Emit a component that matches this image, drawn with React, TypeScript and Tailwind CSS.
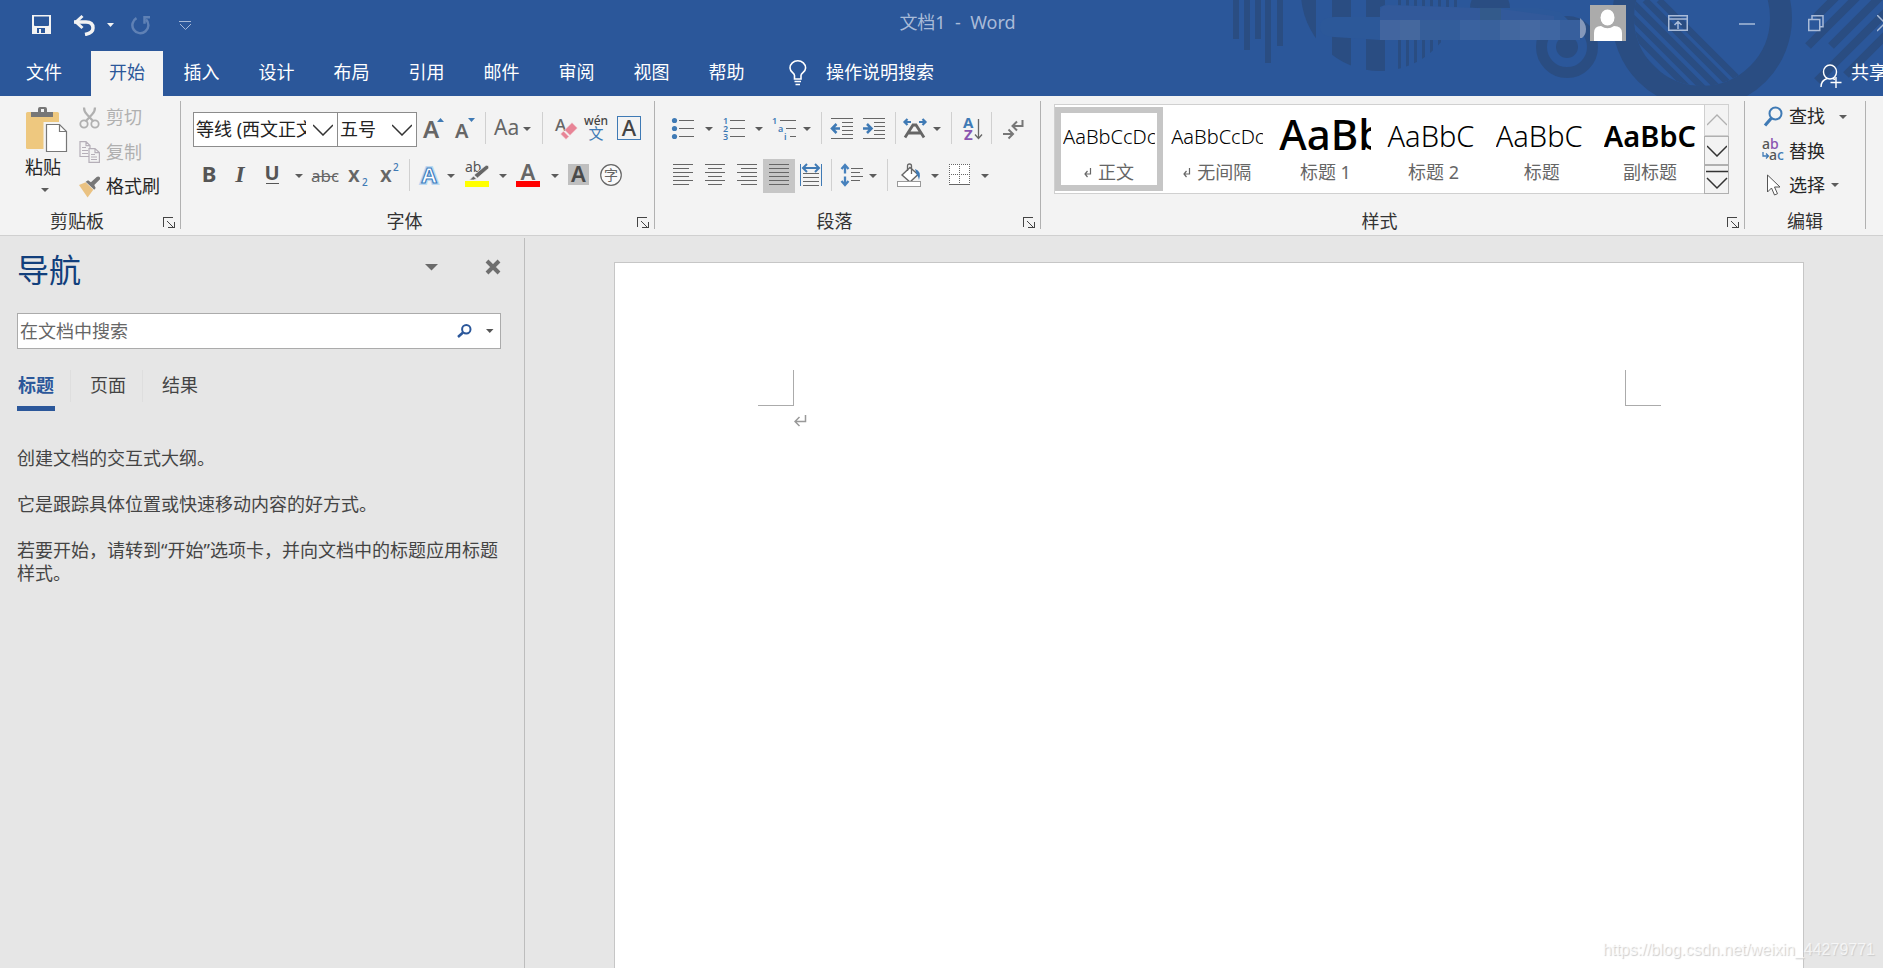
import type { ReactNode } from "react";

const G = "#666666";
const B = "#3f7ab5";

function Icon({ children, label, width = "w-8", active = false }: { children: ReactNode; label: string; width?: string; active?: boolean }) {
  return (
    <button type="button" aria-label={label} className={`flex h-full shrink-0 items-start justify-center pt-1 ${width} ${active ? "bg-[#c6c6c6]" : ""}`}>
      <svg width="24" height="24" viewBox="0 0 24 24" fill="none" className="overflow-visible">
        {children}
      </svg>
    </button>
  );
}

function Caret({ width = "w-3", label }: { width?: string; label: string }) {
  return (
    <button type="button" aria-label={label} className={`flex h-full shrink-0 items-start justify-center pt-1 ${width}`}>
      <svg width="8" height="24" viewBox="0 0 8 24">
        <path d="M0 11h8l-4 4z" fill="#5c5c5c" />
      </svg>
    </button>
  );
}

function Sep({ width = "w-2" }: { width?: string }) {
  return (
    <div className={`flex h-full shrink-0 justify-center ${width}`}>
      <div className="h-8 w-px bg-[#d0d0d0]" />
    </div>
  );
}

function Lines({ rows }: { rows: [number, number, number][] }) {
  return (
    <g stroke={G} strokeWidth="1" shapeRendering="crispEdges">
      {rows.map(([x1, x2, y]) => (
        <path key={`${x1}-${y}`} d={`M${x1} ${y + 0.5}H${x2}`} />
      ))}
    </g>
  );
}

function Group({ label, launcher = true, grow = false, children }: { label: string; launcher?: boolean; grow?: boolean; children: ReactNode }) {
  return (
    <section aria-label={label} className={`flex ${grow ? "min-w-0 flex-1" : "shrink-0"}`}>
      <div className="flex min-w-0 flex-1 flex-col">
        <div className="h-[113px]">{children}</div>
        <div className="flex h-6 items-center">
          <div className="flex-1 text-center leading-6 text-[#333]">{label}</div>
          {launcher && (
            <button type="button" aria-label={`${label}设置`} className="flex w-[26px] justify-end pt-1 pr-[5px]">
              <svg width="12" height="12" viewBox="0 0 12 12" fill="none" stroke="#444" shapeRendering="crispEdges">
                <path d="M.5 10V.5H10" />
                <path d="M4 4l6 6M11 5v5.5H5" />
              </svg>
            </button>
          )}
        </div>
      </div>
      <div className="mt-[5px] h-32 w-px shrink-0 bg-[#b1b1b1]" />
    </section>
  );
}

const tabs = ["开始", "插入", "设计", "布局", "引用", "邮件", "审阅", "视图", "帮助"];

function HeaderArt() {
  return (
    <svg className="pointer-events-none absolute top-0 right-0" width="683" height="96" viewBox="1200 0 683 96" aria-hidden="true">
      <defs>
        <clipPath id="disc"><circle cx="1380" cy="-8" r="79" /></clipPath>
        <clipPath id="hole"><circle cx="1702" cy="18" r="68" /></clipPath>
      </defs>
      <g fill="#2a4d82">
        <rect x="1233" y="0" width="6" height="39" />
        <rect x="1244" y="0" width="6" height="50" />
        <rect x="1255" y="0" width="6" height="39" />
        <rect x="1265" y="0" width="6" height="63" />
        <rect x="1277" y="0" width="6" height="46" />
        <g clipPath="url(#disc)">
          <rect x="1300" y="0" width="16" height="60" />
          <rect x="1332" y="0" width="19" height="80" />
          <rect x="1366" y="0" width="19" height="80" />
          {[1398, 1406, 1414, 1422, 1430, 1438, 1446, 1454].map((x) => (
            <rect key={x} x={x} y="0" width="3" height="80" />
          ))}
        </g>
        <circle cx="1490" cy="8" r="20" />
        <circle cx="1567" cy="47" r="11" />
      </g>
      <g fill="none" stroke="#2a4d82">
        <circle cx="1567" cy="47" r="25.5" strokeWidth="11" />
        <circle cx="1702" cy="18" r="79" strokeWidth="22" />
        <g clipPath="url(#hole)" strokeWidth="6.5">
          <path d="M1568 0l100 100M1584 0l100 100M1600 0l100 100M1615 0l100 100M1630 0l100 100M1645 0l100 100M1659 0l100 100" />
        </g>
        <g strokeWidth="8">
          <path d="M1816 17l20-20M1808 46l54-54M1831 46l54-54M1817 81l70-70M1846 75l40-40" />
        </g>
      </g>
      <path d="M1320 27q0-10 14-10h46V7q3-2 8-2l90 3h60l22 4 10 10v18h-190l-46-3q-14 0-14-10z" fill="#2c5899" />
      <path d="M1380 20v-9q1-6 8-6l62 2 52 2 52 7v4z" fill="#32599a" />
      <rect x="1480" y="8" width="21" height="12" fill="#335a8b" />
      {["#42659f", "#45689e", "#365e99", "#335d9b", "#3a629f", "#39619c", "#42679f", "#4569a2", "#3f66a2", "#375f9d"].map((fill, i) => (
        <rect key={i} x={1380 + i * 20} y="20" width="20" height="20" fill={fill} />
      ))}
      <path d="M1580 18q6 5 6 11t-4 9h-2z" fill="#8598ba" />
    </svg>
  );
}

function Header() {
  return (
    <header className="relative shrink-0 overflow-hidden bg-[#2b579a] text-white">
      <HeaderArt />
      <div className="relative -mr-8 grid h-[51px] grid-cols-[1fr_auto_1fr]">
        <div className="flex items-start gap-5 pt-3 pl-8">
          <button type="button" aria-label="保存">
            <svg width="20" height="24" viewBox="0 0 20 24" fill="#f3f3f3">
              <path fillRule="evenodd" d="M0 3h19v19H0zM2 4.500v8.500q0 1 1 1h13q1 0 1-1V4.500zM5 16v5h2v-4h2v4h4v-5z" />
            </svg>
          </button>
          <div className="flex gap-3">
            <button type="button" aria-label="撤消">
              <svg width="23" height="24" viewBox="0 0 23 24" fill="none" stroke="#f3f3f3">
                <path d="M2 10H14q7 0 7 6 0 5-8 6.500" strokeWidth="3.500" />
                <path d="M10.500 4L4 10l6.500 6" strokeWidth="3" />
              </svg>
            </button>
            <button type="button" aria-label="撤消选项">
              <svg width="8" height="24" viewBox="0 0 8 24"><path d="M0 11h7l-3.500 4z" fill="#f3f3f3" /></svg>
            </button>
          </div>
          <div className="-ml-1 flex gap-7">
            <button type="button" aria-label="重复">
              <svg width="20" height="24" viewBox="0 0 20 24" fill="none" stroke="#5f81b5" strokeWidth="2.500">
                <path d="M5.500 6.200A8 8 0 1 0 15 7.500" />
                <path d="M19 5.200h-5.500v6.500" />
              </svg>
            </button>
            <button type="button" aria-label="自定义快速访问工具栏">
              <svg width="13" height="24" viewBox="0 0 13 24" fill="none" stroke="#a5b8d7"><path d="M0 9.500h12M1 12l5.500 5.500L12 12" /></svg>
            </button>
          </div>
        </div>
        <div className="self-start pt-2 leading-7 whitespace-pre text-[#a9bbd8]">文档1  -  Word</div>
        <div className="-mr-1 flex items-start justify-end">
          <div className="mt-[5px] mr-[17px] h-9 w-9 bg-[#ababab]">
            <svg width="36" height="36" viewBox="0 0 36 36" fill="#fff" aria-label="用户头像">
              <ellipse cx="17.500" cy="12.500" rx="7" ry="8" />
              <path d="M4 36V28q0-7 7-7 6.500 4.500 13 0 8 0 8 7v8z" />
            </svg>
          </div>
          <button type="button" aria-label="功能区显示选项" className="flex w-[69px] justify-center pt-[15px]">
            <svg width="20" height="17" viewBox="0 0 20 17" fill="none" stroke="#a9bbd8" strokeWidth="1.500"><path d="M.75.75h18.500v14.500H.75zM1 4h18M10 14V6.500M6.500 10L10 6.500l3.500 3.500" /></svg>
          </button>
          <button type="button" aria-label="最小化" className="flex w-[69px] justify-center pt-[15px]">
            <svg width="16" height="17" viewBox="0 0 16 17" stroke="#a9bbd8"><path d="M0 9h16" strokeWidth="1.500" /></svg>
          </button>
          <button type="button" aria-label="还原" className="flex w-[69px] justify-center pt-[15px]">
            <svg width="16" height="17" viewBox="0 0 16 17" fill="none" stroke="#a9bbd8" strokeWidth="1.500"><path d="M.75 4.500h11v11h-11zM4 4V.75h11v11h-3" /></svg>
          </button>
          <button type="button" aria-label="关闭" className="flex w-[69px] justify-center pt-[15px]">
            <svg width="16" height="17" viewBox="0 0 16 17" stroke="#a9bbd8" strokeWidth="1.500"><path d="M0 0l16 16M16 0L0 16" /></svg>
          </button>
        </div>
      </div>
      <div className="relative -mr-8 flex h-[45px] items-stretch leading-[43px]">
        <nav className="flex">
          <button type="button" className="w-[90px] pr-0.5 pb-0.5">文件</button>
          {tabs.map((t, i) => (
            <button key={t} type="button" className={`w-[75px] pr-0.5 ${i === 0 ? "bg-[#f3f3f3] bg-clip-content pl-px text-[#2b579a]" : ""}`}>
              <span className="block h-[45px]">{t}</span>
            </button>
          ))}
        </nav>
        <button type="button" className="ml-6 flex gap-[19px]">
          <svg width="18" height="26" viewBox="0 0 18 26" fill="none" stroke="#fff" strokeWidth="1.600" className="mt-[9px]">
            <path d="M5.500 19v-3.500C5.500 13 1 12 1 8a7.800 7.200 0 0 1 15.600 0c0 4-4.600 5-4.600 7.500V19zM5.500 21.500h6.500M6.500 24.500h4.500" />
          </svg>
          操作说明搜索
        </button>
        <button type="button" className="mr-7 ml-auto flex gap-2">
          <svg width="23" height="24" viewBox="0 0 23 24" fill="none" stroke="#fff" strokeWidth="1.400" className="mt-[13px]">
            <ellipse cx="10" cy="8" rx="6.500" ry="7" />
            <path d="M1 23q0-6.500 6-8.500M16 13v11M10.500 18.500h11M13 14.500l2 1" />
          </svg>
          共享
        </button>
      </div>
    </header>
  );
}

function Combo({ id, label, value, width }: { id: string; label: string; value: string; width: string }) {
  return (
    <div className={`flex h-[35px] shrink-0 items-center border border-[#8c8c8c] bg-white ${width}`}>
      <label htmlFor={id} className="sr-only">{label}</label>
      <select id={id} className="h-full min-w-0 flex-1 appearance-none overflow-hidden bg-white pl-0.5 text-[#222] outline-none">
        <option>{value}</option>
      </select>
      <svg width="20" height="12" viewBox="0 0 20 12" fill="none" stroke="#333" strokeWidth="1.500" className="mr-1 ml-[7px] shrink-0" aria-hidden="true">
        <path d="M0 1l10 10L20 1" />
      </svg>
    </div>
  );
}

function ClipboardGroup() {
  return (
    <Group label="剪贴板">
      <div className="flex w-[180px]">
        <button type="button" className="mt-[11px] ml-[25px] flex w-11 flex-col items-start text-[#262626]">
          <svg width="44" height="46" viewBox="0 0 44 46">
            <rect x="1" y="5" width="33" height="37" rx="1.500" fill="#eec87f" />
            <path d="M6 5h7V2q0-2 2-2h5q2 0 2 2v3h6v5H6z" fill="#777" />
            <rect x="16" y="2" width="3" height="3" fill="#f3f3f3" />
            <path d="M20 16.500h14.500L42 24v21H20z" fill="none" stroke="#f3f3f3" strokeWidth="3" />
            <path d="M21.500 17.500h13l7 7v20h-20z" fill="#fff" stroke="#777" strokeWidth="1.200" />
            <path d="M34.500 17.500v7h7" fill="none" stroke="#777" strokeWidth="1.200" />
          </svg>
          <span className="leading-7">粘贴</span>
          <svg width="8" height="24" viewBox="0 0 8 24" className="ml-4"><path d="M0 7h8l-4 4z" fill="#5c5c5c" /></svg>
        </button>
        <div className="mt-1 ml-2.5 flex flex-col">
          <button type="button" className="flex h-[35px] items-center gap-1.5 text-[#b0b0b0]">
            <svg width="21" height="22" viewBox="0 0 21 22" fill="none" stroke="#b0b0b0" strokeWidth="1.800">
              <circle cx="5" cy="17" r="3.700" /><circle cx="16" cy="17" r="3.700" />
              <path d="M5 0.500q0 4 3 7l6.500 7M16 .5q0 4-3 7l-6.500 7" strokeWidth="2.200" />
            </svg>
            <span>剪切</span>
          </button>
          <button type="button" className="flex h-[34px] items-center gap-1.5 text-[#b0b0b0]">
            <svg width="21" height="22" viewBox="0 0 21 22" fill="#f3f3f3" stroke="#b5afb8" strokeWidth="1.200">
              <path d="M1 .6h6l4 4v10.900H1zM7 .6v4h4M3 6.500h4M3 9.500h6M3 12.500h6" />
              <path d="M10 7.600h6l4.400 4v9.800H10zM16 7.600v4h4.400M12 13.500h4M12 16h6M12 18.500h6" />
            </svg>
            <span>复制</span>
          </button>
          <button type="button" className="flex h-[35px] items-center gap-1.5 text-[#262626]">
            <svg width="21" height="22" viewBox="0 0 22 22">
              <path d="M0 9l7-3 8 8-6 8z" fill="#eac282" />
              <path d="M7 5.500l2.500-1.500 3 2 6-5.500q2-1 3.500.5v2L16 9l1.500 3-1.500 2z" fill="#777" />
            </svg>
            <span>格式刷</span>
          </button>
        </div>
      </div>
    </Group>
  );
}

function FontGroup() {
  return (
    <Group label="字体">
      <div className="flex w-[473px] flex-col gap-3 pt-4 pl-3">
        <div className="flex h-[35px]">
          <Combo id="font-name" label="字体" value="等线 (西文正文)" width="w-[145px]" />
          <Combo id="font-size" label="字号" value="五号" width="-ml-px w-20" />
          <Icon label="增大字号">
            <text x="2" y="22" fontSize="24" fontWeight="600" fill={G}>A</text>
            <path d="M16 6l3.500-4L23 6z" fill={B} />
          </Icon>
          <Icon label="减小字号">
            <text x="2" y="22" fontSize="20" fontWeight="600" fill={G}>A</text>
            <path d="M15 2l3.500 4L22 2z" fill={B} />
          </Icon>
          <Sep />
          <Icon label="更改大小写"><text x="1" y="19" fontSize="21" fill={G}>Aa</text></Icon>
          <Caret label="大小写选项" />
          <Sep width="w-[18px]" />
          <Icon label="清除所有格式">
            <text x="0" y="15" fontSize="17" fontWeight="500" fill={G}>A</text>
            <path d="M9.500 14L17 6.500l5.500 5.500L15 19.500zM5.500 18L8.500 15l5.500 5.500L11 23.500z" fill="#e88496" stroke="#f3f3f3" strokeWidth=".6" />
          </Icon>
          <Icon label="拼音指南">
            <text x="9" y="9" fontSize="12" fontWeight="500" textAnchor="middle" fill="#444">wén</text>
            <text x="9" y="23" fontSize="15" textAnchor="middle" fill={B}>文</text>
          </Icon>
          <Icon label="字符边框">
            <rect x="-1.500" y=".5" width="23" height="23" fill="#f3f3f3" stroke={B} />
            <text x="10" y="20" fontSize="22" fontWeight="500" textAnchor="middle" fill="#444">A</text>
          </Icon>
        </div>
        <div className="flex h-[34px]">
          <Icon label="加粗"><text x="12" y="19" fontSize="22" fontWeight="700" textAnchor="middle" fill="#555">B</text></Icon>
          <Icon label="倾斜"><text x="11" y="19" fontSize="24" fontWeight="700" fontStyle="italic" textAnchor="middle" fill="#555" fontFamily="Liberation Serif, serif">I</text></Icon>
          <Icon label="下划线">
            <text x="11" y="17" fontSize="20" fontWeight="700" textAnchor="middle" fill="#555">U</text>
            <path d="M5 20.500h13" stroke="#555" />
          </Icon>
          <Caret width="w-5" label="下划线选项" />
          <Icon label="删除线">
            <text x="12" y="19" fontSize="17" textAnchor="middle" fill={G}>abc</text>
            <path d="M0 13.500h24" stroke={G} />
          </Icon>
          <Icon label="下标">
            <text x="3" y="19" fontSize="21" fontWeight="600" fill={G}>x</text>
            <text x="17" y="23" fontSize="10" fontWeight="500" fill={B}>2</text>
          </Icon>
          <Icon label="上标">
            <text x="3" y="19" fontSize="21" fontWeight="600" fill={G}>x</text>
            <text x="16" y="8" fontSize="10" fontWeight="500" fill={B}>2</text>
          </Icon>
          <Sep />
          <Icon label="文本效果和版式">
            <text x="12" y="20" fontSize="22" fontWeight="700" textAnchor="middle" fill="#fff" stroke="#bcd8f1" strokeWidth="4" paintOrder="stroke">A</text>
            <text x="12" y="20" fontSize="22" fontWeight="700" textAnchor="middle" fill="#fff" stroke="#4080bf" strokeWidth="1.200">A</text>
          </Icon>
          <Caret label="文本效果选项" />
          <Icon width="w-10" label="以不同颜色突出显示文本">
            <text x="0" y="9" fontSize="14" fill="#555">ab</text>
            <path d="M23 2.500q1.500 1.500.5 3L12.500 15l-3.500-3L20 3q1.500-1.200 3-.5zM8.500 13l3 3-3 1H4.500z" fill={G} stroke="#f3f3f3" strokeWidth=".7" />
            <rect x="0" y="18" width="24" height="6" fill="#ffff00" />
          </Icon>
          <Caret label="突出显示颜色" />
          <Icon width="w-10" label="字体颜色">
            <text x="11" y="17" fontSize="22" fontWeight="600" textAnchor="middle" fill={G}>A</text>
            <rect x="-1" y="18" width="24" height="6" fill="#ff0000" />
          </Icon>
          <Caret label="字体颜色选项" />
          <Icon label="字符底纹">
            <rect x="3" y="1" width="21" height="21" fill="#bfbfbf" />
            <text x="13.500" y="19" fontSize="22" fontWeight="600" textAnchor="middle" fill="#4a4a4a">A</text>
          </Icon>
          <Icon label="带圈字符">
            <circle cx="14" cy="12" r="10.300" fill="#fafafa" stroke={G} strokeWidth="1.200" />
            <text x="14" y="17" fontSize="14" textAnchor="middle" fill={G}>字</text>
          </Icon>
        </div>
      </div>
    </Group>
  );
}

function ParagraphGroup() {
  return (
    <Group label="段落">
      <div className="flex w-[385px] flex-col gap-3 pt-4 pl-3">
        <div className="flex h-[35px]">
          <Icon label="项目符号">
            <g fill={B}><circle cx="3.500" cy="4.500" r="2.600" /><circle cx="3.500" cy="12.500" r="2.600" /><circle cx="3.500" cy="20.500" r="2.600" /></g>
            <Lines rows={[[8, 23, 4], [8, 23, 12], [8, 23, 20]]} />
          </Icon>
          <Caret width="w-5" label="项目符号库" />
          <Icon label="编号">
            <g fill={B} fontSize="9" fontWeight="600"><text x="0" y="8">1</text><text x="0" y="16">2</text><text x="0" y="24">3</text></g>
            <Lines rows={[[7, 22, 4], [7, 22, 12], [7, 22, 20]]} />
          </Icon>
          <Caret width="w-4" label="编号库" />
          <Icon label="多级列表">
            <g fill={B} fontSize="9" fontWeight="600"><text x="1" y="8">1</text><text x="7" y="16">a</text><text x="13" y="24">i</text></g>
            <Lines rows={[[9, 25, 4], [15, 25, 12], [19, 25, 20]]} />
          </Icon>
          <Caret width="w-4" label="列表库" />
          <Sep width="w-3" />
          <Icon label="减少缩进量">
            <Lines rows={[[0, 22, 2], [11, 22, 6], [11, 22, 10], [11, 22, 14], [11, 22, 18], [0, 22, 22]]} />
            <path d="M9 12.500H2M5.500 8L1 12.500 5.500 17" stroke={B} strokeWidth="2.500" />
          </Icon>
          <Icon label="增加缩进量">
            <Lines rows={[[0, 22, 2], [11, 22, 6], [11, 22, 10], [11, 22, 14], [11, 22, 18], [0, 22, 22]]} />
            <path d="M0 12.500H7M4 8l4.500 4.500L4 17" stroke={B} strokeWidth="2.500" />
          </Icon>
          <Sep />
          <Icon label="中文版式">
            <path d="M2 21.500L10 9h3l8 12.500M5.500 17h12" stroke={G} strokeWidth="2.800" />
            <path d="M8 6H2M4.500 3L1.500 6l3 3M16 6h6M19.500 3l3 3-3 3" stroke={B} strokeWidth="2.200" />
          </Icon>
          <Caret label="中文版式选项" />
          <Sep width="w-4" />
          <Icon width="w-7" label="排序">
            <text x="2" y="12" fontSize="15" fontWeight="700" fill={B}>A</text>
            <text x="3" y="24" fontSize="15" fontWeight="700" fill="#8a55b0">Z</text>
            <path d="M17.500 3v19M14 18.500l3.500 4 3.500-4" stroke={G} strokeWidth="1.300" />
          </Icon>
          <Sep />
          <Icon label="显示/隐藏编辑标记">
            <path d="M23.500 4v6H14.500M18 5.500L13.500 10l4.500 4.500" stroke="#777" strokeWidth="2" />
            <path d="M4 18h9M9.500 13.500L14 18l-4.500 4.500" stroke="#777" strokeWidth="2" />
          </Icon>
        </div>
        <div className="flex h-[34px]">
          <Icon label="左对齐"><Lines rows={[[2, 22, 1], [2, 18, 5], [2, 22, 9], [2, 18, 13], [2, 22, 17], [2, 18, 21]]} /></Icon>
          <Icon label="居中"><Lines rows={[[2, 22, 1], [5, 19, 5], [2, 22, 9], [5, 19, 13], [2, 22, 17], [5, 19, 21]]} /></Icon>
          <Icon label="右对齐"><Lines rows={[[2, 22, 1], [6, 22, 5], [2, 22, 9], [6, 22, 13], [2, 22, 17], [6, 22, 21]]} /></Icon>
          <Icon label="两端对齐" active><Lines rows={[[2, 22, 1], [2, 22, 5], [2, 22, 9], [2, 22, 13], [2, 22, 17], [2, 22, 21]]} /></Icon>
          <Icon label="分散对齐">
            <path d="M1.500 1v22M22.500 1v22" stroke={B} />
            <path d="M5 5h14M8 1L4 5l4 4M16 1l4 4-4 4" stroke={B} strokeWidth="2" />
            <Lines rows={[[4, 20, 10], [4, 20, 14], [4, 20, 18], [4, 20, 22]]} />
          </Icon>
          <Sep />
          <Icon label="行和段落间距">
            <path d="M6 2v8.500M6 13.500V22M2.500 6L6 2l3.500 4M2.500 18L6 22l3.500-4" stroke="#4681bd" strokeWidth="2.300" />
            <Lines rows={[[12, 24, 5], [12, 21, 9], [12, 24, 13], [12, 21, 17]]} />
          </Icon>
          <Caret label="行距选项" />
          <Sep width="w-4" />
          <Icon label="底纹">
            <path d="M3 12L11 4.500l8 7L11 19z" fill="#fff" stroke={G} strokeWidth="1.400" />
            <path d="M8.500 8V3q0-2 2-2t2 2v8" stroke={G} strokeWidth="1.300" />
            <path d="M16 6q7 2 4 11-1-4-2.500-6z" fill={B} />
            <rect x="-1.500" y="18.500" width="23" height="5" fill="#fff" stroke="#999" />
          </Icon>
          <Caret width="w-4" label="底纹颜色" />
          <Icon label="边框">
            <rect x="2" y="1" width="21" height="21" fill="#fff" />
            <path d="M2.500 1v20M12.500 1v20M22.500 1v20M2 1.500h21M2 11.500h21" stroke={G} strokeDasharray="1 1" shapeRendering="crispEdges" />
            <path d="M2 21.500h21" stroke={G} shapeRendering="crispEdges" />
          </Icon>
          <Caret width="w-5" label="边框选项" />
        </div>
      </div>
    </Group>
  );
}

const styles = [
  { name: "正文", sample: "AaBbCcDc", cls: "text-[20px] font-light leading-[48px]", mark: true },
  { name: "无间隔", sample: "AaBbCcDc", cls: "text-[20px] font-light leading-[48px]", mark: true },
  { name: "标题 1", sample: "AaBb", cls: "text-[42px] font-medium leading-[42px]", mark: false },
  { name: "标题 2", sample: "AaBbC", cls: "text-[29px] font-light leading-[46px]", mark: false },
  { name: "标题", sample: "AaBbC", cls: "text-[29px] font-light leading-[46px]", mark: false },
  { name: "副标题", sample: "AaBbC", cls: "text-[29px] font-semibold leading-[46px]", mark: false },
];

function StylesGroup() {
  return (
    <Group label="样式" grow>
      <div className="pt-2 pr-[15px] pl-[13px]">
        <div className="flex h-[90px] bg-white">
          <div className="grid min-w-0 flex-1 grid-cols-6 border border-r-0 border-[#d0d0d0] py-0.5">
            {styles.map((s, i) => (
              <button key={s.name} type="button" className={`flex h-[84px] min-w-0 flex-col items-center border-[6px] px-0.5 ${i === 0 ? "border-[#c6c6c6]" : "border-transparent"}`}>
                <span className={`block h-12 w-full overflow-hidden text-left whitespace-nowrap text-black ${s.cls}`}>{s.sample}</span>
                <span className="flex items-center gap-1.5 leading-[22px] whitespace-nowrap text-[#666]">
                  {s.mark && (
                    <svg width="8" height="12" viewBox="0 0 8 12" fill="none" stroke="#666" strokeWidth="1.200"><path d="M6.500 2v6H1M3.500 5L1 8l2.500 3" /></svg>
                  )}
                  {s.name}
                </span>
              </button>
            ))}
          </div>
          <div className="flex w-[25px] shrink-0 flex-col bg-[#f3f3f3]">
            <button type="button" aria-label="上一行" className="flex h-8 items-center justify-center border border-[#d0d0d0]">
              <svg width="20" height="12" viewBox="0 0 20 12" fill="none" stroke="#b0b0b0" strokeWidth="1.300"><path d="M0 11L10 1l10 10" /></svg>
            </button>
            <button type="button" aria-label="下一行" className="flex h-[29px] items-center justify-center border border-[#b0b0b0]">
              <svg width="20" height="12" viewBox="0 0 20 12" fill="none" stroke="#333" strokeWidth="1.500"><path d="M0 1l10 10L20 1" /></svg>
            </button>
            <button type="button" aria-label="其他样式" className="flex h-[29px] items-center justify-center border border-[#b0b0b0]">
              <svg width="22" height="20" viewBox="0 0 22 20" fill="none" stroke="#333" strokeWidth="1.500"><path d="M0 1.500h22M1 8l10 10L21 8" /></svg>
            </button>
          </div>
        </div>
      </div>
    </Group>
  );
}

function EditingGroup() {
  return (
    <Group label="编辑" launcher={false}>
      <div className="flex w-[120px] flex-col pt-[3px] pl-[17px] text-[#262626]">
        <button type="button" className="flex h-[35px] items-center">
          <svg width="23" height="22" viewBox="0 0 23 22" fill="none" stroke={B} className="mr-1"><circle cx="13.500" cy="7.500" r="6" strokeWidth="2" /><path d="M9.500 12L3 19.500" strokeWidth="3.200" /></svg>
          查找
          <svg width="8" height="6" viewBox="0 0 8 6" className="ml-3.5"><path d="M0 1h8l-4 4z" fill="#5c5c5c" /></svg>
        </button>
        <button type="button" className="flex h-[34px] items-center">
          <svg width="23" height="22" viewBox="0 0 23 22" className="mr-1 overflow-visible">
            <text x="0" y="9" fontSize="14" fontWeight="500" fill="#555">a<tspan fill="#8a55b0">b</tspan></text>
            <text x="7" y="20" fontSize="14" fontWeight="500" fill="#555">a<tspan fill={B}>c</tspan></text>
            <path d="M1 12v4h5M4 13.500L6.500 16 4 18.500" fill="none" stroke={B} strokeWidth="1.300" />
          </svg>
          替换
        </button>
        <button type="button" className="flex h-[34px] items-center">
          <svg width="23" height="22" viewBox="0 0 23 22" fill="#fff" stroke="#555" className="mr-1"><path d="M5.500 1v17l4-4 3 7 3-1.300-3-6.700h5.500z" /></svg>
          选择
          <svg width="8" height="6" viewBox="0 0 8 6" className="ml-1.5"><path d="M0 1h8l-4 4z" fill="#5c5c5c" /></svg>
        </button>
      </div>
    </Group>
  );
}

function Navigation() {
  return (
    <aside aria-label="导航" className="mt-0.5 flex w-[525px] shrink-0 flex-col border-r border-[#bdbdbd] pr-[23px] pl-[17px]">
      <div className="flex h-[75px] items-start">
        <h1 className="flex-1 pt-3 text-[32px] leading-10 text-[#123f7c]">导航</h1>
        <button type="button" aria-label="任务窗格选项" className="mt-6"><svg width="13" height="10" viewBox="0 0 13 10"><path d="M0 2h13L6.500 8.500z" fill="#6a6a6a" /></svg></button>
        <button type="button" aria-label="关闭" className="mt-[21px] ml-[47px]"><svg width="16" height="16" viewBox="0 0 16 16" stroke="#6f6f6f" strokeWidth="4"><path d="M2 2l12 12M14 2L2 14" /></svg></button>
      </div>
      <div className="flex h-9 items-center border border-[#ababab] bg-white">
        <label htmlFor="nav-search" className="sr-only">搜索文档</label>
        <input id="nav-search" type="text" placeholder="在文档中搜索" className="h-full min-w-0 flex-1 bg-transparent pl-0.5 text-[#333] outline-none placeholder:text-[#666]" />
        <button type="button" aria-label="搜索"><svg width="15" height="14" viewBox="0 0 15 14" fill="none" stroke="#2b579a" strokeWidth="2"><circle cx="9.300" cy="5.300" r="4.200" /><path d="M6 8.500L1 13" strokeWidth="2.500" /></svg></button>
        <button type="button" aria-label="搜索选项" className="mr-1.5 ml-3.5"><svg width="8" height="6" viewBox="0 0 8 6"><path d="M0 1h7.500L3.750 5z" fill="#555" /></svg></button>
      </div>
      <div className="mt-[21px] flex h-[41px] items-start text-[#444]">
        <button type="button" className="flex h-[41px] items-start border-b-[5px] border-[#2b579a] px-px leading-[30px] font-bold text-[#2b579a]">标题</button>
        <div className="ml-[15px] h-8 w-px bg-[#dedede]" />
        <button type="button" className="ml-[19px] leading-[30px]">页面</button>
        <div className="ml-4 h-8 w-px bg-[#dedede]" />
        <button type="button" className="ml-[19px] leading-[30px]">结果</button>
      </div>
      <div className="mt-9 -mr-1.5 flex flex-col gap-[23px] leading-[23px] text-[#444]">
        <p>创建文档的交互式大纲。</p>
        <p>它是跟踪具体位置或快速移动内容的好方式。</p>
        <p>若要开始，请转到“开始”选项卡，并向文档中的标题应用标题样式。</p>
      </div>
    </aside>
  );
}

export default function App() {
  return (
    <div className="relative flex h-screen flex-col overflow-hidden bg-[#e6e6e6] font-['Noto_Sans','Noto_Sans_CJK_SC',sans-serif] text-[18px]">
      <Header />
      <div className="flex h-[140px] shrink-0 border-b border-[#d0d0d0] bg-[#f3f3f3] pr-[17px]">
        <ClipboardGroup />
        <FontGroup />
        <ParagraphGroup />
        <StylesGroup />
        <EditingGroup />
      </div>
      <div className="flex min-h-0 flex-1">
        <Navigation />
        <main className="mt-[26px] mr-[79px] ml-[89px] flex-1 border border-b-0 border-[#c6c6c6] bg-white pt-[107px] pr-[142px] pl-[143px]">
          <div className="flex justify-between">
            <div className="h-9 w-9 border-r border-b border-[#ababab]" />
            <div className="h-9 w-9 border-b border-l border-[#ababab]" />
          </div>
          <svg width="14" height="14" viewBox="0 0 14 14" fill="none" stroke="#999" strokeWidth="1.500" className="mt-2 ml-9"><path d="M11.500 1v6.500H1M5.500 3L1 7.500 5.500 12" /></svg>
        </main>
      </div>
      <div className="pointer-events-none absolute right-2 bottom-1.5 font-['Liberation_Sans',sans-serif] text-[16px] leading-6 text-white/70 [text-shadow:1px_1px_1px_#ccc]">https://blog.csdn.net/weixin_44279771</div>
    </div>
  );
}
